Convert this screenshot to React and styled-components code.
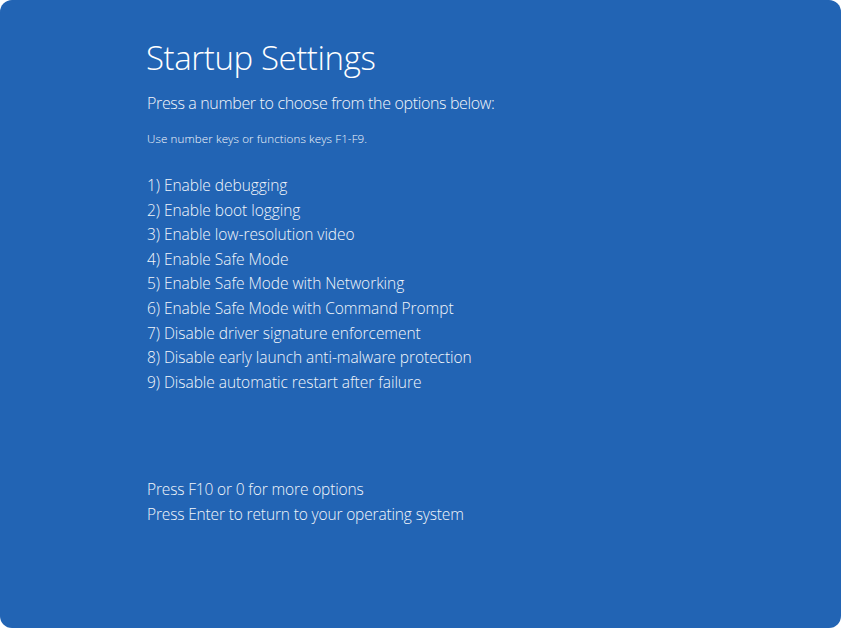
import React from 'react';
import styled, { createGlobalStyle } from 'styled-components';

const GlobalStyle = createGlobalStyle`
  html, body {
    margin: 0;
    padding: 0;
    background: #ffffff;
  }
  * { box-sizing: border-box; }
`;

const Screen = styled.main`
  width: 841px;
  height: 628px;
  background-color: #2264b4;
  border-radius: 12px;
  padding: 36px 0 0 146px;
  color: #ffffff;
  font-family: "Open Sans", "Noto Sans", sans-serif;
  overflow: hidden;
`;

const Title = styled.h1`
  margin: 0;
  font-size: 33px;
  font-weight: 300;
  line-height: 44px;
  letter-spacing: -0.4px;
`;

const Lead = styled.p`
  margin: 12px 0 0 1px;
  font-size: 16px;
  font-weight: 300;
  line-height: 22px;
  letter-spacing: -0.35px;
  color: #f2f6fb;
`;

const Hint = styled.p`
  margin: 18px 0 0 1px;
  font-size: 11.6px;
  font-weight: 300;
  line-height: 14px;
  letter-spacing: 0.1px;
  color: #f2f6fb;
`;

const Options = styled.ol`
  list-style: none;
  margin: 27px 0 0 1px;
  padding: 0;
`;

const Option = styled.li`
  font-size: 15.5px;
  font-weight: 300;
  line-height: 24.6px;
  letter-spacing: -0.05px;
  color: #f2f6fb;
`;

const Footer = styled.div`
  margin: 83px 0 0 1px;
`;

const FooterLine = styled(Option).attrs({ as: 'p' })`
  margin: 0;
  letter-spacing: -0.15px;
`;

const options = [
  'Enable debugging',
  'Enable boot logging',
  'Enable low-resolution video',
  'Enable Safe Mode',
  'Enable Safe Mode with Networking',
  'Enable Safe Mode with Command Prompt',
  'Disable driver signature enforcement',
  'Disable early launch anti-malware protection',
  'Disable automatic restart after failure',
];

const App = () => {
  return (
    <>
      <GlobalStyle />
      <Screen>
        <Title>Startup Settings</Title>
        <Lead>Press a number to choose from the options below:</Lead>
        <Hint>Use number keys or functions keys F1-F9.</Hint>
        <Options>
          {options.map((label, i) => (
            <Option key={label}>{i + 1}) {label}</Option>
          ))}
        </Options>
        <Footer>
          <FooterLine>Press F10 or 0 for more options</FooterLine>
          <FooterLine>Press Enter to return to your operating system</FooterLine>
        </Footer>
      </Screen>
    </>
  );
};

export default App;
